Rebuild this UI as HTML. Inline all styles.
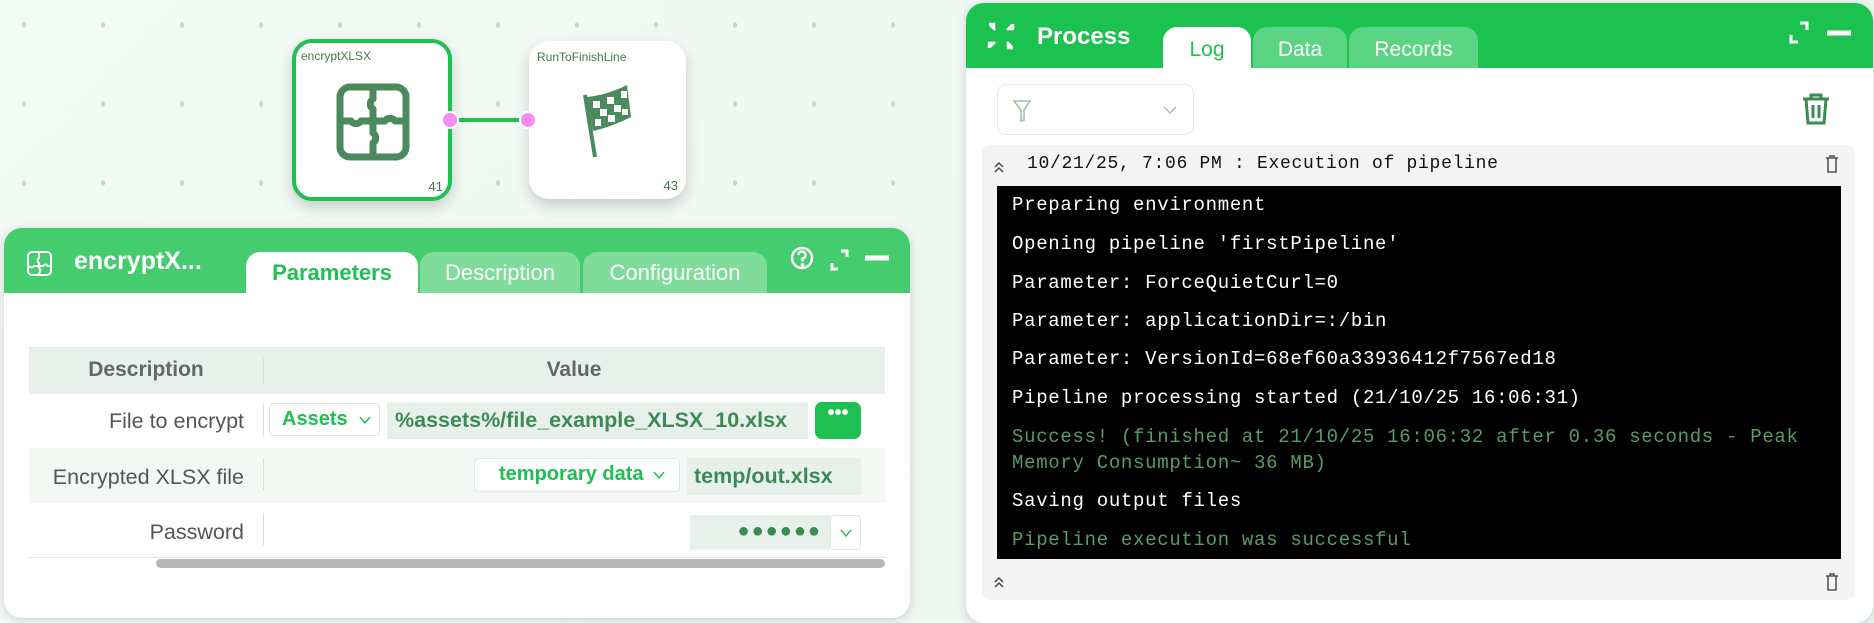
<!DOCTYPE html>
<html><head><meta charset="utf-8"><style>
*{box-sizing:border-box;margin:0;padding:0}
body{width:1874px;height:619px;overflow:hidden;position:relative;font-family:"Liberation Sans",sans-serif;
background-image:radial-gradient(ellipse 2px 3px at 24px 25px,#c9d4cd 95%,transparent 100%),linear-gradient(135deg,#f4faf6,#eaf4ee);
background-size:79px 79px,100% 100%;}
.abs{position:absolute}
.node{position:absolute;background:#fff;border-radius:20px;box-shadow:0 6px 14px rgba(0,0,0,.18)}
.nl{position:absolute;left:8px;top:9px;font-size:12px;color:#3d7a4f}
.nn{position:absolute;right:8px;bottom:6px;font-size:13px;color:#3d7a4f}
.pin{position:absolute;width:18px;height:18px;border-radius:50%;background:#f58cf0;border:2px solid #fff}
.panel{position:absolute;background:#fff;border-radius:18px;box-shadow:0 2px 10px rgba(0,0,0,.15);overflow:hidden}
.tab{position:absolute;border-radius:14px 14px 0 0;text-align:center;font-size:22px;color:#fff}
.lbl{position:absolute;right:0;font-size:21.5px;color:#555;text-align:right;white-space:nowrap}
.mono{font-family:"Liberation Mono",monospace}
.log div{position:absolute;left:15px;font-size:19px;color:#fff;white-space:nowrap;letter-spacing:0.7px}
.log .g{color:#5a9a68}
.dd{display:inline-block;vertical-align:middle}
</style></head><body>
<div class="node" style="left:292px;top:39px;width:160px;height:162px;border:4px solid #1ec052"><div class="nl" style="left:5px;top:6px">encryptXLSX</div><div class="nn" style="right:5px;bottom:3px">41</div>
<svg class="abs" style="left:40px;top:40px" width="74" height="78" viewBox="0 0 74 78" fill="none" stroke="#4a8a5c" stroke-width="7" stroke-linejoin="round"><rect x="4" y="4" width="66" height="70" rx="10"/><path d="M37 4v12a6 6 0 0 0 0 10v12H25a6 6 0 0 1-10 0H4M37 38v12a6 6 0 0 1 0 10v14M37 38h12a6 6 0 0 1 10 0h11"/></svg></div>
<div class="node" style="left:529px;top:41px;width:157px;height:158px"><div class="nl">RunToFinishLine</div><div class="nn">43</div>
<svg class="abs" style="left:50px;top:42px" width="60" height="74" viewBox="0 0 60 74"><path d="M6 12L16 74" stroke="#4a8a5c" stroke-width="4"/><path d="M8 14Q28 12 48 2L52 34Q32 44 14 48Z" fill="#4a8a5c"/><g fill="#fff"><rect x="14" y="18" width="7" height="7"/><rect x="28" y="14" width="7" height="7"/><rect x="42" y="8" width="6" height="7"/><rect x="21" y="26" width="7" height="7"/><rect x="35" y="22" width="7" height="7"/><rect x="16" y="36" width="6" height="7"/><rect x="29" y="32" width="7" height="7"/><rect x="43" y="26" width="6" height="6"/></g></svg></div>
<div class="abs" style="left:452px;top:118px;width:78px;height:4px;background:#1ec052"></div>
<div class="pin" style="left:441px;top:111px"></div>
<div class="pin" style="left:519px;top:111px"></div>

<div class="panel" style="left:4px;top:228px;width:906px;height:390px">
<div class="abs" style="left:0;top:0;width:906px;height:65px;background:#45cc6e"></div>
<svg class="abs" style="left:22px;top:22px" width="27" height="27" viewBox="0 0 27 27" fill="none" stroke="#fff" stroke-width="2"><rect x="2" y="2" width="23" height="23" rx="4"/><path d="M13 2v6a3 3 0 0 0 0 5v3H8a3 3 0 0 1-5 0M13 14v4a3 3 0 0 1 0 5v2M13 16h4a3 3 0 0 1 5 0h3"/></svg>
<div class="abs" style="left:70px;top:19px;font-size:25px;font-weight:bold;color:#fff">encryptX...</div>
<div class="tab" style="left:242px;top:24px;width:172px;height:42px;background:#fff;color:#1ec052;font-weight:bold;line-height:42px">Parameters</div>
<div class="tab" style="left:416px;top:24px;width:160px;height:41px;background:#7fdc9a;line-height:42px">Description</div>
<div class="tab" style="left:579px;top:24px;width:184px;height:41px;background:#7fdc9a;line-height:42px">Configuration</div>
<svg class="abs" style="left:786px;top:17px" width="104" height="30" viewBox="0 0 104 30" fill="none" stroke="#fff" stroke-width="2.5"><circle cx="12" cy="13" r="10"/><path d="M8.5 10a3.5 3.5 0 1 1 4 3.5v3" /><circle cx="12.5" cy="20" r=".6" fill="#fff"/><path d="M42 18v6h6M51 6h6v6" stroke-width="3"/><path d="M75 13h24" stroke-width="5"/></svg>
<div class="abs" style="left:25px;top:119px;width:856px;height:1px;background:#e3ebe6"></div>
<div class="abs" style="left:25px;top:120px;width:856px;height:46px;background:#e8f0eb"></div>
<div class="abs" style="left:25px;top:166px;width:856px;height:54px;background:#fff"></div>
<div class="abs" style="left:25px;top:220px;width:856px;height:55px;background:#f3f8f5"></div>
<div class="abs" style="left:25px;top:329px;width:856px;height:1px;background:#e3ebe6"></div>
<div class="abs" style="left:259px;top:130px;width:1px;height:26px;background:#d6dfd9"></div>
<div class="abs" style="left:259px;top:176px;width:1px;height:32px;background:#d6dfd9"></div>
<div class="abs" style="left:259px;top:230px;width:1px;height:32px;background:#d6dfd9"></div>
<div class="abs" style="left:259px;top:285px;width:1px;height:32px;background:#d6dfd9"></div>
<div class="abs" style="left:25px;top:130px;width:234px;text-align:center;font-size:21px;font-weight:bold;color:#666">Description</div>
<div class="abs" style="left:260px;top:130px;width:620px;text-align:center;font-size:21px;font-weight:bold;color:#666">Value</div>
<div class="abs" style="left:0;top:0;width:240px;height:390px"><div class="lbl" style="top:181px">File to encrypt</div><div class="lbl" style="top:237px">Encrypted XLSX file</div><div class="lbl" style="top:292px">Password</div></div>
<div class="abs" style="left:265px;top:175px;width:111px;height:33px;border:1px solid #dde6e0;border-radius:5px;background:#fff;font-size:20px;font-weight:bold;color:#1ec052;padding:4px 0 0 12px;white-space:nowrap">Assets <svg class="dd" width="12" height="10" viewBox="0 0 12 10" style="margin-left:6px"><path d="M1 2l5 6 5-6" fill="none" stroke="#1ec052" stroke-width="1.4"/></svg></div>
<div class="abs" style="left:383px;top:174px;width:421px;height:37px;background:#e8f0eb;font-size:21.5px;font-weight:bold;color:#3d8a55;padding:6px 0 0 8px;white-space:nowrap;overflow:hidden">%assets%/file_example_XLSX_10.xlsx</div>
<div class="abs" style="left:811px;top:174px;width:46px;height:37px;background:#1ec052;border-radius:7px;color:#fff;text-align:center;font-weight:bold;font-size:20px;line-height:22px">&bull;&bull;&bull;</div>
<div class="abs" style="left:470px;top:230px;width:206px;height:34px;border:1px solid #dde6e0;border-radius:5px;background:#fff;font-size:20px;font-weight:bold;color:#1ec052;padding:4px 0 0 24px;white-space:nowrap">temporary data <svg class="dd" width="12" height="10" viewBox="0 0 12 10" style="margin-left:4px"><path d="M1 2l5 6 5-6" fill="none" stroke="#1ec052" stroke-width="1.4"/></svg></div>
<div class="abs" style="left:683px;top:230px;width:174px;height:37px;background:#e8f0eb;font-size:21.5px;font-weight:bold;color:#3d8a55;padding:6px 0 0 7px;white-space:nowrap">temp/out.xlsx</div>
<div class="abs" style="left:686px;top:287px;width:140px;height:35px;background:#e8f0eb;font-size:20px;font-weight:bold;color:#3d8a55;text-align:right;padding:5px 8px 0 0;letter-spacing:2px">&#9679;&#9679;&#9679;&#9679;&#9679;&#9679;</div>
<div class="abs" style="left:826px;top:287px;width:31px;height:35px;border:1px solid #dde6e0;border-radius:4px;background:#fff;text-align:center;padding-top:9px"><svg width="12" height="10" viewBox="0 0 12 10"><path d="M1 2l5 6 5-6" fill="none" stroke="#1ec052" stroke-width="1.4"/></svg></div>
<div class="abs" style="left:152px;top:331px;width:729px;height:9px;border-radius:5px;background:#b5b6b6"></div>
</div>

<div class="panel" style="left:966px;top:3px;width:907px;height:620px">
<div class="abs" style="left:0;top:0;width:907px;height:65px;background:#1cc24f"></div>
<svg class="abs" style="left:20px;top:17px" width="30" height="32" viewBox="0 0 30 32" fill="none" stroke="#fff" stroke-width="2.5"><path d="M3 4h5v5M4 5l5 5M27 4v5h-5M26 5l-5 5M3 28v-5h5M4 27l5-5M27 28h-5v-5M26 27l-5-5"/></svg>
<div class="abs" style="left:71px;top:20px;font-size:24px;font-weight:bold;color:#fff">Process</div>
<div class="tab" style="left:197px;top:24px;width:88px;height:42px;background:#fff;color:#1cc24f;line-height:46px;font-size:21px">Log</div>
<div class="tab" style="left:287px;top:24px;width:94px;height:41px;background:#5bd583;line-height:46px;font-size:21px">Data</div>
<div class="tab" style="left:383px;top:24px;width:129px;height:41px;background:#5bd583;line-height:46px;font-size:21px">Records</div>
<svg class="abs" style="left:820px;top:16px" width="72" height="30" viewBox="0 0 72 30" fill="none" stroke="#fff" stroke-width="3"><path d="M5 16v7h7M14 4h7v7"/><path d="M41 14h24" stroke-width="5"/></svg>
<div class="abs" style="left:31px;top:81px;width:197px;height:51px;border:1px solid #e6ece8;border-radius:9px"></div>
<svg class="abs" style="left:46px;top:96px" width="20" height="24" viewBox="0 0 20 24" fill="none" stroke="#9cc4a6" stroke-width="1.6"><path d="M2 2h16l-6 9v10l-3 1V11z"/></svg>
<svg class="abs" style="left:197px;top:102px" width="14" height="10" viewBox="0 0 14 10"><path d="M1 2l6 6 6-6" fill="none" stroke="#9cc4a6" stroke-width="1.5"/></svg>
<svg class="abs" style="left:835px;top:89px" width="30" height="34" viewBox="0 0 30 34" fill="none" stroke="#3d8a55" stroke-width="3"><path d="M2 7h26M10 7V3h10v4M5 7l2 24h16l2-24M12 13v13M18 13v13"/></svg>
<div class="abs" style="left:16px;top:142px;width:873px;height:455px;background:#f4f4f4;border-radius:8px"></div>
<svg class="abs" style="left:27px;top:157px" width="12" height="14" viewBox="0 0 12 14" fill="none" stroke="#444" stroke-width="1.5"><path d="M2 7l4-4 4 4M2 12l4-4 4 4"/></svg>
<div class="abs mono" style="left:61px;top:151px;font-size:18px;color:#111;letter-spacing:0.7px;white-space:nowrap">10/21/25, 7:06 PM : Execution of pipeline</div>
<svg class="abs" style="left:859px;top:152px" width="14" height="18" viewBox="0 0 14 18" fill="none" stroke="#555" stroke-width="1.6"><path d="M1 3h12M5 3V1h4v2M3 3v14h8V3"/></svg>
<div class="abs log mono" style="left:31px;top:183px;width:844px;height:373px;background:#000">
<div style="top:8px">Preparing environment</div>
<div style="top:47px">Opening pipeline 'firstPipeline'</div>
<div style="top:86px">Parameter: ForceQuietCurl=0</div>
<div style="top:124px">Parameter: applicationDir=:/bin</div>
<div style="top:162px">Parameter: VersionId=68ef60a33936412f7567ed18</div>
<div style="top:201px">Pipeline processing started (21/10/25 16:06:31)</div>
<div class="g" style="top:240px">Success! (finished at 21/10/25 16:06:32 after 0.36 seconds - Peak</div>
<div class="g" style="top:266px">Memory Consumption~ 36 MB)</div>
<div style="top:304px">Saving output files</div>
<div class="g" style="top:343px">Pipeline execution was successful</div>
</div>
<svg class="abs" style="left:27px;top:572px" width="12" height="14" viewBox="0 0 12 14" fill="none" stroke="#444" stroke-width="1.5"><path d="M2 7l4-4 4 4M2 12l4-4 4 4"/></svg>
<svg class="abs" style="left:859px;top:570px" width="14" height="18" viewBox="0 0 14 18" fill="none" stroke="#555" stroke-width="1.6"><path d="M1 3h12M5 3V1h4v2M3 3v14h8V3"/></svg>
</div>
</body></html>
